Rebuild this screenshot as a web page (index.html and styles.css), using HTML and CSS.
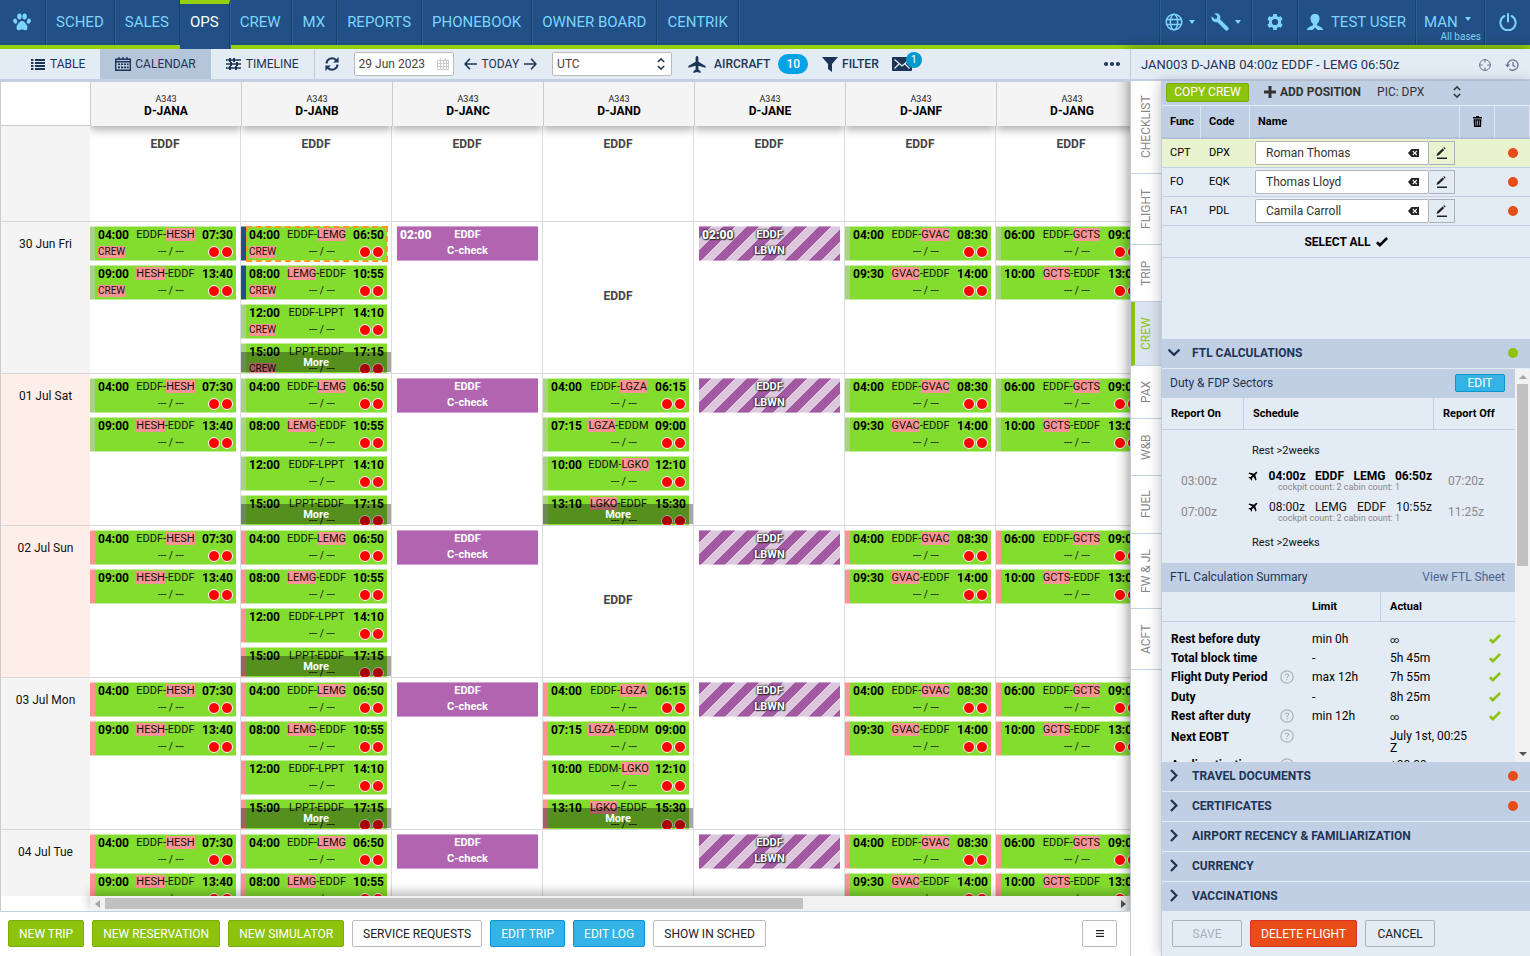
FILE: index.html
```html
<!DOCTYPE html>
<html lang="en">
<head>
<meta charset="utf-8">
<title>OPS Calendar</title>
<link rel="stylesheet" href="styles.css">
</head>
<body>
<svg class="sprite" aria-hidden="true">
  <symbol id="i-paw" viewBox="0 0 18 18"><ellipse cx="6.4" cy="3.6" rx="2.2" ry="3"/><ellipse cx="11.6" cy="3.6" rx="2.2" ry="3"/><ellipse cx="2.2" cy="8.2" rx="1.9" ry="2.6" transform="rotate(-20 2.2 8.2)"/><ellipse cx="15.8" cy="8.2" rx="1.9" ry="2.6" transform="rotate(20 15.8 8.2)"/><path d="M9 8c2.6 0 3 2 4.300 3.400C15 13 15 17 12.500 17.300 11 17.500 10.500 16.600 9 16.600S7 17.500 5.500 17.300C3 17 3 13 4.700 11.400 6 10 6.400 8 9 8z"/></symbol>
  <symbol id="i-globe" viewBox="0 0 18 18"><g fill="none" stroke="currentColor" stroke-width="1.500"><circle cx="9" cy="9" r="7.800"/><ellipse cx="9" cy="9" rx="3.600" ry="7.800"/><path d="M1.500 6.400h15M1.500 11.600h15"/></g></symbol>
  <symbol id="i-wrench" viewBox="0 0 18 18"><path d="M.6 3.200 3.800 6.100 6 5.600 6.300 3.300 3.400.5C6 -.3 8.700.8 9.300 3.600c.2 1 .1 1.900-.3 2.600l8.300 8.200c1.500 1.700-1.100 4.400-2.900 2.900L6.200 9C3.300 9.900-.3 7.600.6 3.200z"/></symbol>
  <symbol id="i-gear" viewBox="0 0 16 16"><path fill-rule="evenodd" d="M6.300 0h3.400l.5 2.200 1.500.9 2.200-.8 1.700 2.900-1.600 1.600v2.400l1.600 1.600-1.700 2.900-2.200-.8-1.500.9L9.700 16H6.300l-.5-2.200-1.500-.9-2.200.8L.4 10.800 2 9.200V6.800L.4 5.200l1.700-2.900 2.200.8 1.500-.9zM8 4.900a3.100 3.100 0 100 6.200 3.100 3.100 0 000-6.200z"/></symbol>
  <symbol id="i-user" viewBox="0 0 16 16"><path d="M8 0c3 0 4.800 2 4.500 5-.2 2.300-1.200 4-2.400 4.800v1.700c2 .8 5.400 1.400 5.900 4.500h-5.500L8 13.600 5.500 16H0c.5-3.100 3.900-3.700 5.900-4.500V9.800C4.700 9 3.700 7.300 3.500 5 3.200 2 5 0 8 0z"/></symbol>
  <symbol id="i-power" viewBox="0 0 18 18"><path fill="none" stroke="currentColor" stroke-width="2" stroke-linecap="round" d="M5.400 3A7.600 7.600 0 1012.600 3M9 .9v7.600"/></symbol>
  <symbol id="i-caret" viewBox="0 0 6 4"><path d="M0 0h6L3 4z"/></symbol>
  <symbol id="i-list" viewBox="0 0 14 11"><path d="M0 0h2.400v2H0zM4 0h10v2H4zM0 3h2.400v2H0zM4 3h10v2H4zM0 6h2.400v2H0zM4 6h10v2H4zM0 9h2.400v2H0zM4 9h10v2H4z"/></symbol>
  <symbol id="i-cal" viewBox="0 0 16 14"><path fill="none" stroke="currentColor" stroke-width="1.400" d="M.7 2.200h14.600v11H.7zM1 4.800h14M4 0v3M8 0v3M12 0v3"/><path d="M3 6.400h2v1.600H3zM6 6.400h2v1.600H6zM9 6.400h2v1.600H9zM12 6.400h1.600v1.600H12zM3 9.600h2v1.600H3zM6 9.600h2v1.600H6zM9 9.600h2v1.600H9zM12 9.600h1.600v1.600H12z"/></symbol>
  <symbol id="i-sliders" viewBox="0 0 15 12"><path d="M0 1.200h15v1.600H0zM0 5.200h15v1.600H0zM0 9.200h15v1.600H0zM3 0h2v4H3zM7 0h2v4H7zM10 4h2v4h-2zM4 4h2v4H4zM3 8h2v4H3zM9 8h2v4H9z"/></symbol>
  <symbol id="i-refresh" viewBox="0 0 14 14"><path fill="none" stroke="currentColor" stroke-width="2" d="M1.500 6.500A5.500 5.500 0 0111 3M12.500 7.500A5.500 5.500 0 013 11"/><path d="M13.600 0v5.400H8.200zM.4 14V8.600h5.400z"/></symbol>
  <symbol id="i-grid" viewBox="0 0 12 12"><path fill="none" stroke="currentColor" d="M.5 2.500h11v9H.5zM0 5.500h12M0 8.500h12M3.500 2v10M6.500 2v10M9.500 2v10M3.500 0v3M8.500 0v3"/></symbol>
  <symbol id="i-arrow" viewBox="0 0 13 12"><path fill="none" stroke="currentColor" stroke-width="1.600" d="M0 6h12M7 .8 12 6l-5 5.200"/></symbol>
  <symbol id="i-updown" viewBox="0 0 8 12"><path fill="none" stroke="currentColor" stroke-width="1.600" d="M.8 4 4 1l3.200 3M.8 8 4 11l3.200-3"/></symbol>
  <symbol id="i-plane" viewBox="0 0 18 17"><path d="M9 0c1 0 1.400 1.200 1.400 2.400v3.400L17.600 10v1.800l-7.200-2v3.800l2.200 1.700V17L9 16l-3.600 1v-1.700l2.200-1.700V9.800l-7.200 2V10l7.200-4.200V2.400C7.600 1.200 8 0 9 0z"/></symbol>
  <symbol id="i-funnel" viewBox="0 0 16 15"><path d="M0 0h16L10 7v8l-4-3V7z"/></symbol>
  <symbol id="i-mail" viewBox="0 0 20 14"><rect width="20" height="14" rx="1"/><path fill="none" stroke="#e3ebf5" stroke-width="1.200" d="M2.500 2.500 10 9l7.500-6.500M2.500 11.500 7 7M17.500 11.500 13 7"/></symbol>
  <symbol id="i-dots" viewBox="0 0 16 4"><circle cx="2" cy="2" r="2"/><circle cx="8" cy="2" r="2"/><circle cx="14" cy="2" r="2"/></symbol>
  <symbol id="i-target" viewBox="0 0 12 12"><g fill="none" stroke="currentColor"><circle cx="6" cy="6" r="5.400"/><path d="M6 0v3.500M6 8.500V12M0 6h3.500M8.500 6H12"/></g></symbol>
  <symbol id="i-history" viewBox="0 0 14 12"><path fill="none" stroke="currentColor" stroke-width="1.300" d="M2.600 6A5.200 5.200 0 114.300 9.900M8 3v3.400l2.300 1.400"/><path d="M0 5.600h5.200L2.600 8.600z"/></symbol>
  <symbol id="i-plus" viewBox="0 0 12 12"><path d="M4.500 0h3v4.500H12v3H7.500V12h-3V7.500H0v-3h4.500z"/></symbol>
  <symbol id="i-trash" viewBox="0 0 9 11"><path fill-rule="evenodd" d="M3 0h3v1h3v1.500H0V1h3zM.6 3.200h7.800L8 11H1zM2.500 4.500v5h.7v-5zM4.200 4.500v5h.7v-5zM5.900 4.500v5h.7v-5z"/></symbol>
  <symbol id="i-clear" viewBox="0 0 11 8"><path fill-rule="evenodd" d="M3.500 0H11v8H3.500L0 4zM5.200 1.600 4.400 2.400 6 4 4.400 5.600l.8.800L6.800 4.800l1.600 1.600.8-.8L7.600 4l1.600-1.600-.8-.8-1.600 1.600z"/></symbol>
  <symbol id="i-edit" viewBox="0 0 11 12"><path d="M1 10.500h10V12H1zM.5 9l.7-2.600 5.400-5 1.600 1.600-5.200 5zM7.200.8 8 0l1.700 1.600-.8.8z"/></symbol>
  <symbol id="i-check" viewBox="0 0 12 10"><path d="M1.800 4.200 0 6.200 3.900 10 12 2 10.200 0 3.900 6.300z"/></symbol>
  <symbol id="i-chev" viewBox="0 0 8 13"><path fill="none" stroke="currentColor" stroke-width="2.200" d="M1 1l5.400 5.500L1 12"/></symbol>
  <symbol id="i-menu" viewBox="0 0 8 7"><path d="M0 0h8v1.200H0zM0 2.900h8v1.200H0zM0 5.800h8V7H0z"/></symbol>
  <symbol id="i-help" viewBox="0 0 14 14"><circle cx="7" cy="7" r="6.200" fill="none" stroke="currentColor" stroke-width="1.200"/><path fill="none" stroke="currentColor" stroke-width="1.200" d="M5.300 5.600c0-2.200 3.400-2 3.300-.1C8.500 6.700 7 6.600 7 8.100M7 9v1.300"/></symbol>
</svg>

<header class="nav">
  <nav class="nav-main">
    <a class="nav-item nav-logo" href="#" aria-label="Home"><svg class="ic18"><use href="#i-paw"/></svg></a>
    <a class="nav-item" href="#">SCHED</a>
    <a class="nav-item" href="#">SALES</a>
    <a class="nav-item is-active" href="#">OPS</a>
    <a class="nav-item" href="#">CREW</a>
    <a class="nav-item nav-mx" href="#">MX</a>
    <a class="nav-item" href="#">REPORTS</a>
    <a class="nav-item" href="#">PHONEBOOK</a>
    <a class="nav-item" href="#">OWNER BOARD</a>
    <a class="nav-item" href="#">CENTRIK</a>
  </nav>
  <div class="nav-tools">
    <button class="tool tool-drop" aria-label="Language"><svg class="ic18"><use href="#i-globe"/></svg><svg class="caret"><use href="#i-caret"/></svg></button>
    <button class="tool tool-drop" aria-label="Tools"><svg class="ic18"><use href="#i-wrench"/></svg><svg class="caret"><use href="#i-caret"/></svg></button>
    <button class="tool" aria-label="Settings"><svg class="ic16"><use href="#i-gear"/></svg></button>
    <button class="tool tool-user"><svg class="ic16"><use href="#i-user"/></svg>TEST USER</button>
    <button class="tool tool-base"><span class="base-code">MAN <svg class="caret"><use href="#i-caret"/></svg></span><span class="base-note">All bases</span></button>
    <button class="tool" aria-label="Log out"><svg class="ic18"><use href="#i-power"/></svg></button>
  </div>
</header>

<div class="app">
  <main class="work">
    <div class="toolbar">
      <a class="view view-table" href="#"><svg class="ic-list"><use href="#i-list"/></svg>TABLE</a>
      <a class="view is-current" href="#"><svg class="ic-cal"><use href="#i-cal"/></svg>CALENDAR</a>
      <a class="view" href="#"><svg class="ic-sliders"><use href="#i-sliders"/></svg>TIMELINE</a>
      <button class="plain refresh" aria-label="Refresh"><svg class="ic14"><use href="#i-refresh"/></svg></button>
      <div class="field date-field"><input type="text" aria-label="Date" value="29 Jun 2023"><svg class="ic12"><use href="#i-grid"/></svg></div>
      <div class="today">
        <button class="plain" aria-label="Previous day"><svg class="ic-arrow is-back"><use href="#i-arrow"/></svg></button>
        <button class="plain">TODAY</button>
        <button class="plain" aria-label="Next day"><svg class="ic-arrow"><use href="#i-arrow"/></svg></button>
      </div>
      <div class="field zone-field"><select aria-label="Time zone"><option>UTC</option></select><svg class="ic-updown"><use href="#i-updown"/></svg></div>
      <button class="plain med aircraft"><svg class="ic-plane"><use href="#i-plane"/></svg>AIRCRAFT <span class="pill">10</span></button>
      <button class="plain med filter"><svg class="ic-funnel"><use href="#i-funnel"/></svg>FILTER</button>
      <button class="plain mail" aria-label="Messages"><svg class="ic-mail"><use href="#i-mail"/></svg><span class="badge">1</span></button>
      <button class="plain more-menu" aria-label="More"><svg class="ic-dots"><use href="#i-dots"/></svg></button>
    </div>
    <section class="calendar">
      <div class="cal-head" id="cal-head"></div>
      <div class="cal-body" id="cal-body"></div>
      <div class="hscroll"><span class="hs-left"></span><span class="hs-track"><span class="hs-thumb"></span></span><span class="hs-right"></span></div>
    </section>
    <footer class="actions">
      <button class="btn btn-green">NEW TRIP</button>
      <button class="btn btn-green">NEW RESERVATION</button>
      <button class="btn btn-green">NEW SIMULATOR</button>
      <button class="btn">SERVICE REQUESTS</button>
      <button class="btn btn-blue">EDIT TRIP</button>
      <button class="btn btn-blue">EDIT LOG</button>
      <button class="btn">SHOW IN SCHED</button>
      <button class="btn btn-menu" aria-label="Menu"><svg class="ic-menu"><use href="#i-menu"/></svg></button>
    </footer>
  </main>

  <aside class="side">
    <div class="side-title"><h2>JAN003 D-JANB 04:00z EDDF - LEMG 06:50z</h2><svg class="ic-target"><use href="#i-target"/></svg><svg class="ic-history"><use href="#i-history"/></svg></div>
    <div class="side-main">
      <nav class="tabs">
        <a class="tab tab-93" href="#">CHECKLIST</a>
        <a class="tab tab-71" href="#">FLIGHT</a>
        <a class="tab tab-57" href="#">TRIP</a>
        <a class="tab tab-64 is-on" href="#">CREW</a>
        <a class="tab tab-53" href="#">PAX</a>
        <a class="tab tab-57" href="#">W&amp;B</a>
        <a class="tab tab-58" href="#">FUEL</a>
        <a class="tab tab-75" href="#">FW &amp; JL</a>
        <a class="tab tab-61" href="#">ACFT</a>
      </nav>
      <div class="panel">
        <section class="crew">
          <div class="crew-bar">
            <button class="btn btn-green btn-small">COPY CREW</button>
            <button class="plain add-pos"><svg class="ic12"><use href="#i-plus"/></svg>ADD POSITION</button>
            <div class="pic"><select aria-label="PIC"><option>PIC: DPX</option></select><svg class="ic-updown"><use href="#i-updown"/></svg></div>
          </div>
          <table class="crew-table">
            <thead><tr><th class="c-func">Func</th><th class="c-code">Code</th><th>Name</th><th class="c-del"><svg class="ic-trash"><use href="#i-trash"/></svg></th><th class="c-dot"></th></tr></thead>
            <tbody>
              <tr class="is-sel"><td>CPT</td><td>DPX</td><td colspan="2" class="c-name"><div class="name"><div class="name-box"><input type="text" aria-label="CPT name" value="Roman Thomas"><svg class="ic-clear"><use href="#i-clear"/></svg></div><button class="edit" aria-label="Edit CPT"><svg class="ic-edit"><use href="#i-edit"/></svg></button></div></td><td><span class="dot"></span></td></tr>
              <tr><td>FO</td><td>EQK</td><td colspan="2" class="c-name"><div class="name"><div class="name-box"><input type="text" aria-label="FO name" value="Thomas Lloyd"><svg class="ic-clear"><use href="#i-clear"/></svg></div><button class="edit" aria-label="Edit FO"><svg class="ic-edit"><use href="#i-edit"/></svg></button></div></td><td><span class="dot"></span></td></tr>
              <tr><td>FA1</td><td>PDL</td><td colspan="2" class="c-name"><div class="name"><div class="name-box"><input type="text" aria-label="FA1 name" value="Camila Carroll"><svg class="ic-clear"><use href="#i-clear"/></svg></div><button class="edit" aria-label="Edit FA1"><svg class="ic-edit"><use href="#i-edit"/></svg></button></div></td><td><span class="dot"></span></td></tr>
            </tbody>
          </table>
          <button class="select-all">SELECT ALL <svg class="ic-check"><use href="#i-check"/></svg></button>
        </section>

        <button class="acc is-open"><svg class="ic-chev"><use href="#i-chev"/></svg><span>FTL CALCULATIONS</span><span class="dot dot-ok"></span></button>
        <section class="ftl">
          <div class="ftl-view">
            <div class="sub"><span>Duty &amp; FDP Sectors</span><button class="btn btn-blue btn-edit">EDIT</button></div>
            <table class="duty">
              <thead><tr><th class="d-on">Report On</th><th>Schedule</th><th class="d-off">Report Off</th></tr></thead>
              <tbody>
                <tr class="rest"><td></td><td>Rest &gt;2weeks</td><td></td></tr>
                <tr class="leg is-now"><td>03:00z</td><td><div class="leg-line"><svg class="ic-fly"><use href="#i-plane"/></svg><span>04:00z</span><span>EDDF</span><span>LEMG</span><span>06:50z</span></div><div class="leg-note">cockpit count: 2 cabin count: 1</div></td><td>07:20z</td></tr>
                <tr class="leg"><td>07:00z</td><td><div class="leg-line"><svg class="ic-fly"><use href="#i-plane"/></svg><span>08:00z</span><span>LEMG</span><span>EDDF</span><span>10:55z</span></div><div class="leg-note">cockpit count: 2 cabin count: 1</div></td><td>11:25z</td></tr>
                <tr class="rest"><td></td><td>Rest &gt;2weeks</td><td></td></tr>
              </tbody>
            </table>
            <div class="sub"><span>FTL Calculation Summary</span><a href="#">View FTL Sheet</a></div>
            <table class="sum">
              <thead><tr><th class="s-name"></th><th class="s-help"></th><th class="s-limit">Limit</th><th class="s-act">Actual</th><th></th></tr></thead>
              <tbody>
                <tr><th>Rest before duty</th><td></td><td>min 0h</td><td><span class="inf">∞</span></td><td><svg class="ic-check"><use href="#i-check"/></svg></td></tr>
                <tr><th>Total block time</th><td></td><td>-</td><td>5h 45m</td><td><svg class="ic-check"><use href="#i-check"/></svg></td></tr>
                <tr><th>Flight Duty Period</th><td><svg class="ic-help"><use href="#i-help"/></svg></td><td>max 12h</td><td>7h 55m</td><td><svg class="ic-check"><use href="#i-check"/></svg></td></tr>
                <tr><th>Duty</th><td></td><td>-</td><td>8h 25m</td><td><svg class="ic-check"><use href="#i-check"/></svg></td></tr>
                <tr><th>Rest after duty</th><td><svg class="ic-help"><use href="#i-help"/></svg></td><td>min 12h</td><td><span class="inf">∞</span></td><td><svg class="ic-check"><use href="#i-check"/></svg></td></tr>
                <tr class="s-tall"><th>Next EOBT</th><td><svg class="ic-help"><use href="#i-help"/></svg></td><td></td><td>July 1st, 00:25 Z</td><td></td></tr>
                <tr><th>Acclimatisation</th><td><svg class="ic-help"><use href="#i-help"/></svg></td><td></td><td>+00:00</td><td></td></tr>
              </tbody>
            </table>
          </div>
          <div class="vscroll"><span class="vs-up"></span><span class="vs-track"><span class="vs-thumb"></span></span><span class="vs-down"></span></div>
        </section>
        <button class="acc"><svg class="ic-chev"><use href="#i-chev"/></svg><span>TRAVEL DOCUMENTS</span><span class="dot"></span></button>
        <button class="acc"><svg class="ic-chev"><use href="#i-chev"/></svg><span>CERTIFICATES</span><span class="dot"></span></button>
        <button class="acc"><svg class="ic-chev"><use href="#i-chev"/></svg><span>AIRPORT RECENCY &amp; FAMILIARIZATION</span></button>
        <button class="acc"><svg class="ic-chev"><use href="#i-chev"/></svg><span>CURRENCY</span></button>
        <button class="acc"><svg class="ic-chev"><use href="#i-chev"/></svg><span>VACCINATIONS</span></button>
        <footer class="side-actions">
          <button class="btn btn-clear btn-wide" disabled>SAVE</button>
          <button class="btn btn-red">DELETE FLIGHT</button>
          <button class="btn btn-clear btn-wide">CANCEL</button>
        </footer>
      </div>
    </div>
  </aside>
</div>
<script src="calendar.js"></script>
</body>
</html>
```
FILE: styles.css
```css
* { box-sizing: border-box; }
body { margin: 0; height: 100vh; display: flex; flex-direction: column; overflow: hidden; font: 12px/16px Roboto, "Liberation Sans", sans-serif; color: #000; background: #fff; }
a { color: inherit; text-decoration: none; }
button, input, select { font: inherit; color: inherit; }
button { background: none; border: 0; padding: 0; cursor: pointer; }
svg { display: block; flex: none; fill: currentColor; }
table { border-collapse: separate; border-spacing: 0; width: 100%; table-layout: fixed; }
th { text-align: left; font-weight: 700; }
td, th { padding: 0; }
h2 { margin: 0; font-weight: 400; }
.sprite { position: absolute; width: 0; height: 0; }
.ic12 { width: 12px; height: 12px; }
.ic14 { width: 14px; height: 14px; }
.ic16 { width: 16px; height: 16px; }
.ic18 { width: 18px; height: 18px; }
.caret { width: 6px; height: 4px; }
.ic-list { width: 14px; height: 11px; }
.ic-cal { width: 16px; height: 14px; }
.ic-sliders { width: 15px; height: 12px; }
.ic-arrow { width: 13px; height: 12px; }
.is-back { transform: scaleX(-1); }
.ic-updown { width: 8px; height: 12px; }
.ic-plane { width: 18px; height: 17px; }
.ic-funnel { width: 16px; height: 15px; }
.ic-mail { width: 20px; height: 14px; }
.ic-dots { width: 16px; height: 4px; }
.ic-target { width: 12px; height: 12px; }
.ic-history { width: 14px; height: 12px; }
.ic-trash { width: 9px; height: 11px; }
.ic-clear { width: 11px; height: 8px; }
.ic-edit { width: 11px; height: 12px; }
.ic-check { width: 12px; height: 10px; }
.ic-chev { width: 8px; height: 13px; }
.ic-menu { width: 8px; height: 7px; }
.ic-help { width: 14px; height: 14px; }
.ic-fly { width: 11px; height: 11px; transform: rotate(45deg); }

/* top navigation */
.nav { flex: none; display: flex; justify-content: space-between; height: 49px; background: #205085; box-shadow: inset 0 -4px #97d00f; color: #7fd3ff; font-size: 15px; }
.nav-main, .nav-tools { display: flex; }
.nav-main { flex: 1; }
.nav-item { display: flex; align-items: center; height: 45px; padding: 0 10px 2px; border-right: 1px solid #17406e; box-shadow: 1px 0 #2c6090; }
.nav-logo { padding: 0 14px 2px 13px; }
.nav-mx { padding: 0 11px 2px; }
.nav-item.is-active { height: 49px; border-top: 4px solid #97d00f; padding-bottom: 10px; background: #205085; color: #fff; }
.tool { display: flex; align-items: center; justify-content: center; gap: 6px; width: 46px; height: 45px; padding-bottom: 2px; border-left: 1px solid #17406e; box-shadow: inset 1px 0 #2c6090; }
.tool-drop { padding-right: 6px; }
.tool-user { width: 118px; gap: 8px; }
.tool-base { width: 69px; flex-direction: column; align-items: stretch; gap: 0; padding: 7px 3px 0 8px; line-height: 14px; }
.base-code { display: flex; align-items: center; gap: 7px; height: 22px; padding-top: 6px; }
.base-code .caret { align-self: flex-start; margin-top: 3px; }
.base-note { font-size: 10px; text-align: right; }

.app { flex: 1; min-height: 0; display: flex; }
.work { flex: 1; min-width: 0; display: flex; flex-direction: column; }

/* toolbar */
.toolbar { position: relative; z-index: 4; flex: none; display: flex; align-items: center; height: 33px; background: #e3ebf5; border-bottom: 3px solid #c4d0e2; color: #1c3557; }
.view { display: flex; align-items: center; gap: 5px; height: 30px; padding: 0 15px; }
.view-table { padding-left: 31px; }
.view.is-current { gap: 4px; background: #b5c5da; }
.view:nth-child(3) { border-right: 1px solid #c0cde0; }
.refresh { margin: 0 15px 0 10px; }
.field { display: flex; align-items: center; height: 24px; padding: 0 4px; border: 1px solid #bbb; border-radius: 2px; background: #fff; color: #444; }
.field input, .field select { flex: 1; min-width: 0; border: 0; padding: 0; background: none; appearance: none; outline: 0; }
.date-field { width: 100px; }
.date-field svg { color: #ccc; }
.today { display: flex; align-items: center; gap: 5px; margin: 0 15px 0 10px; }
.zone-field { width: 120px; padding-right: 6px; }
.zone-field svg { color: #1c3557; }
.plain { display: flex; align-items: center; }
.med { font-weight: 500; }
.aircraft { margin-left: 16px; gap: 8px; }
.pill { height: 20px; padding: 0 8px; border-radius: 10px; background: #00a2e8; color: #fff; line-height: 20px; }
.filter { margin-left: 14px; gap: 4px; }
.mail { position: relative; margin-left: 13px; }
.badge { position: absolute; left: 14px; top: -5px; width: 16px; height: 16px; border-radius: 8px; background: #0098d0; color: #fff; font-size: 11px; }
.more-menu { margin: 0 10px 0 auto; }

/* calendar */
.calendar { flex: 1; min-height: 0; display: flex; flex-direction: column; overflow: hidden; border-left: 1px solid #ccc; }
.cal-head { position: relative; z-index: 3; flex: none; display: flex; height: 44px; }
.corner { flex: none; width: 89px; background: #fff; border-bottom: 1px solid #ccc; }
.tail { flex: none; width: 151px; padding-top: 11px; border-left: 1px solid #ccc; background: #f4f4f4; box-shadow: 0 4px 8px rgba(0,0,0,.3); text-align: center; line-height: 12px; font-size: 9px; color: #222; clip-path: inset(0 0 -16px 0); }
.tail b { display: block; font-size: 12px; color: #000; }
.cal-body { flex: 1; min-height: 0; overflow: hidden; }
.day { display: flex; height: 152px; }
.day-first { height: 96px; }
.day-name { flex: none; width: 89px; padding-top: 14px; border-bottom: 1px solid #d8d8d8; background: #f4f4f4; text-align: center; color: #111; }
.is-weekend .day-name { background: #fdeee9; }
.cell { position: relative; flex: none; width: 151px; padding-top: 4px; border-right: 1px solid #ddd; border-bottom: 1px solid #d8d8d8; overflow: hidden; }
.cell.is-idle { display: flex; align-items: center; justify-content: center; padding: 0 0 4px; font-weight: 700; color: #444; }
.day-first .cell.is-idle { align-items: flex-start; padding-top: 10px; }
.ev { --stripe: #a8d284; width: 146px; height: 35px; margin-bottom: 4px; padding: 1px 3px 0 8px; border: solid rgba(255,255,255,.5); border-width: 1px 0; background: linear-gradient(to right, var(--stripe) 5px, #83dd2f 5px); }
.ev-pink { --stripe: #ff9292; }
.ev-blue { --stripe: #205085; }
.ev-picked { position: relative; }
.ev-picked::after { content: ""; position: absolute; inset: -1px -1px -2px 5px; border: 2px dashed #ff9a1a; }
.ev-top { display: grid; grid-template-columns: 1fr auto 1fr; align-items: center; height: 14px; line-height: 14px; }
.ev-top b:last-child { text-align: right; }
.ev-route { font-size: 11px; color: #111; }
.alert { background: #ff9494; }
.ev-sub { display: grid; grid-template-columns: 60px 24px 1fr; align-items: center; height: 19px; font-size: 10px; line-height: 12px; color: #111; }
.ev-sub .alert { justify-self: start; }
.ev-dash { text-align: center; white-space: nowrap; }
.ev-dots { display: flex; justify-content: flex-end; gap: 1px; }
.ev-dots i { width: 12px; height: 12px; border: 1px solid #fff; border-radius: 50%; background: #f00; }
.maint { position: relative; width: 141px; height: 35px; margin-left: 5px; border: solid rgba(255,255,255,.4); border-width: 1px 0; background: #b165b1; color: #fff; font-size: 11px; font-weight: 700; line-height: 16px; text-align: center; }
.maint span { display: block; }
.maint b { position: absolute; left: 3px; top: 0; font-size: 12px; }
.maint-ferry { background: linear-gradient(135deg, #a259a2 25%, #dcc8dd 25% 50%, #a259a2 50% 75%, #dcc8dd 75%) 0 0 / 24px 24px; text-shadow: 0 0 2px #222, 0 0 2px #222, 1px 1px 1px #333; }
.more { position: absolute; left: 0; right: 0; bottom: 1px; height: 20px; padding: 2px 0 0; background: rgba(0,0,0,.35); color: #fff; font-size: 11px; font-weight: 700; text-align: center; }
.hscroll { position: relative; z-index: 2; flex: none; display: flex; align-items: center; gap: 5px; height: 15px; margin-left: 89px; padding: 0 4px 0 5px; background: #f1f1f1; box-shadow: 0 -3px 12px rgba(0,0,0,.3); }
.hs-left, .hs-right { border: solid transparent; border-width: 4px 0; }
.hs-left { border-right: 5px solid #a3a3a3; }
.hs-right { border-left: 5px solid #505050; }
.hs-track { flex: 1; height: 11px; }
.hs-thumb { display: block; width: 69%; height: 11px; background: #c1c1c1; }

.actions { position: relative; z-index: 4; flex: none; display: flex; gap: 8px; height: 45px; padding: 8px 13px 0 8px; border-top: 1px solid #c5cfdf; background: #fff; }
.btn { height: 27px; padding: 0 10px; border: 1px solid #bbb; border-radius: 2px; background: #fff; color: #222; white-space: nowrap; }
.btn-green { border-color: #7cab0c; background: #8dc20d; color: #fff; }
.btn-blue { border-color: #0f93cc; background: #33b3e6; color: #fff; }
.btn-red { border-color: #d23127; background: #e84c18; color: #fff; }
.btn-clear { border-color: #a9b1bd; background: none; }
.btn:disabled { color: #a9b1bd; }
.btn-wide { width: 70px; }
.btn-small { width: 83px; height: 19px; padding: 0; line-height: 17px; }
.btn-edit { width: 50px; height: 18px; padding: 0; line-height: 16px; }
.btn-menu { display: flex; align-items: center; justify-content: center; width: 35px; margin-left: auto; }

/* side panel */
.side { position: relative; z-index: 3; flex: none; width: 400px; display: flex; flex-direction: column; border-left: 1px solid #c0cde0; background: #fff; box-shadow: -2px 0 12px rgba(0,0,0,.4); }
.side-title { flex: none; display: flex; align-items: center; gap: 14px; height: 32px; padding: 2px 11px 0 10px; border-bottom: 2px solid #c4d0e2; background: #e3ebf5; color: #1c3557; }
.side-title h2 { flex: 1; font-size: 13px; }
.side-title svg { color: #66758c; }
.side-main { flex: 1; min-height: 0; display: flex; }
.tabs { flex: none; width: 30px; color: #888; }
.tab { display: flex; align-items: center; justify-content: center; width: 30px; border-top: 1px solid #c4d2e4; writing-mode: vertical-rl; transform: rotate(180deg); }
.tab.is-on { padding-left: 4px; border-right: 4px solid #8dc20d; background: #dbe5f1; color: #8dc20d; }
.tab-53 { height: 53px; }
.tab-57 { height: 57px; }
.tab-58 { height: 58px; }
.tab-61 { height: 61px; }
.tab-64 { height: 64px; }
.tab-71 { height: 71px; }
.tab-75 { height: 75px; }
.tab-93 { height: 93px; }
.panel { position: relative; flex: 1; min-width: 0; display: flex; flex-direction: column; border-left: 1px solid #c0cde0; background: #e3ebf5; box-shadow: -2px 0 12px rgba(0,0,0,.2); }
.crew { flex: 258 1 0; min-height: 0; overflow: hidden; }
.crew-bar { display: flex; align-items: center; height: 25px; padding: 0 4px 2px; border-bottom: 1px solid #e3ebf5; background: #c0cfe3; color: #333; }
.add-pos { margin-left: 15px; gap: 4px; font-weight: 700; }
.pic { display: flex; align-items: center; width: 84px; margin-left: 16px; }
.pic select { flex: 1; min-width: 0; border: 0; padding: 0; background: none; appearance: none; }
.crew-table { font-size: 11px; }
.crew-table th { height: 33px; padding-left: 8px; border-right: 1px solid #dbe5f1; border-bottom: 2px solid #b2c1d6; background: #c0cfe3; }
.crew-table td { height: 29px; padding-left: 8px; border-bottom: 1px solid #c4d0e2; }
.crew-table .is-sel td { background: #e9f3cf; }
.c-func { width: 39px; }
.c-code { width: 49px; }
.crew-table .c-del { width: 35px; padding-left: 13px; }
.c-dot { width: 35px; }
.crew-table td.c-name { padding-left: 5px; }
.crew-table td:last-child { padding-left: 13px; }
.name { display: flex; width: 200px; height: 24px; font-size: 12px; color: #333; }
.name-box { display: flex; align-items: center; flex: 1; min-width: 0; padding: 0 9px 0 10px; border: 1px solid #b5b5b5; border-radius: 2px; background: #fff; }
.name-box input { flex: 1; min-width: 0; border: 0; padding: 0; background: none; outline: 0; }
.name-box svg, .edit svg { color: #222; }
.edit { flex: none; display: flex; align-items: center; justify-content: center; width: 26px; border: 1px solid #a9b1bd; border-left: 0; }
.dot { display: block; width: 10px; height: 10px; border-radius: 50%; background: #e84c18; }
.dot-ok { background: #8dc20d; }
.select-all { display: flex; align-items: center; justify-content: center; gap: 5px; width: 100%; height: 32px; border-bottom: 1px solid #c4d0e2; font-weight: 700; }
.acc { flex: none; display: flex; align-items: center; gap: 14px; height: 30px; padding: 0 12px 2px 8px; border-bottom: 1px solid #e3ebf5; background: #c0cfe3; color: #1c3557; font-weight: 700; }
.acc .dot { margin-left: auto; }
.acc.is-open svg { transform: rotate(90deg); }
.ftl { flex: 393 1 0; min-height: 0; display: flex; overflow: hidden; }
.ftl-view { flex: 1; min-width: 0; overflow: hidden; }
.sub { display: flex; align-items: center; justify-content: space-between; height: 29px; padding: 0 10px 2px 8px; background: #c0cfe3; color: #1c3557; }
.sub a { color: #4b668c; }
.duty th { height: 32px; padding-left: 9px; border-right: 1px solid #c0cfe3; border-bottom: 1px solid #c0cfe3; font-size: 11px; }
.duty th:last-child { border-right: 0; }
.d-on { width: 82px; }
.d-off { width: 81px; }
.duty tbody { color: #888; }
.duty tbody td:first-child { padding-left: 19px; }
.duty tbody td:last-child { padding-left: 14px; }
.rest td { padding-left: 8px; font-size: 11px; color: #111; }
.rest:last-child td { height: 36px; padding-bottom: 5px; }
.rest:first-child td { height: 35px; padding-top: 6px; }
.leg td { height: 31px; }
.leg-line { display: flex; align-items: center; justify-content: space-between; height: 12px; padding: 0 2px 0 4px; color: #111; }
.is-now .leg-line { font-weight: 700; color: #000; }
.leg-line svg { color: #000; }
.leg-note { font-size: 9px; line-height: 10px; text-align: center; }
.sum thead th { height: 30px; border-bottom: 1px solid #c0cfe3; font-size: 11px; }
.s-name { width: 118px; }
.s-help { width: 32px; }
.s-limit { width: 69px; }
.sum thead .s-limit { border-right: 1px solid #c0cfe3; }
.s-act { width: 96px; }
.sum thead .s-act { padding-left: 9px; }
.sum tbody th { padding-left: 9px; }
.sum tbody td, .sum tbody th { height: 19px; }
.sum tbody tr:nth-child(odd) > * { height: 20px; }
.sum tbody td:nth-child(4) { padding-left: 9px; line-height: 12px; }
.sum tbody td:last-child { padding-left: 12px; color: #8dc20d; }
.sum tbody tr:first-child > * { height: 26px; padding-top: 8px; }
.sum tbody tr.s-tall > * { height: 29px; vertical-align: top; padding-top: 3px; }
.sum tbody tr.s-tall > td:nth-child(4) { padding-top: 4px; }
.inf { font-size: 9px; }
.ic-help { color: #aab2bd; }
.vscroll { flex: none; display: flex; flex-direction: column; align-items: center; gap: 5px; width: 15px; padding: 6px 0; background: #f1f1f1; }
.vs-up, .vs-down { border: solid transparent; border-width: 0 4px; }
.vs-up { border-bottom: 4px solid #a3a3a3; }
.vs-down { border-top: 4px solid #505050; }
.vs-track { flex: 1; width: 11px; }
.vs-thumb { display: block; width: 11px; height: 50%; background: #c1c1c1; }
.side-actions { flex: none; display: flex; gap: 8px; height: 44px; padding: 8px 10px; }
```
FILE: calendar.js
```javascript
const tails = ["D-JANA", "D-JANB", "D-JANC", "D-JAND", "D-JANE", "D-JANF", "D-JANG"];
// A "*" marks the airport that carries an alert.
const flights = {
  "D-JANA": [["04:00", "EDDF-*HESH", "07:30"], ["09:00", "*HESH-EDDF", "13:40"]],
  "D-JANB": [["04:00", "EDDF-*LEMG", "06:50"], ["08:00", "*LEMG-EDDF", "10:55"], ["12:00", "EDDF-LPPT", "14:10"], ["15:00", "LPPT-EDDF", "17:15"]],
  "D-JAND": [["04:00", "EDDF-*LGZA", "06:15"], ["07:15", "*LGZA-EDDM", "09:00"], ["10:00", "EDDM-*LGKO", "12:10"], ["13:10", "*LGKO-EDDF", "15:30"]],
  "D-JANF": [["04:00", "EDDF-*GVAC", "08:30"], ["09:30", "*GVAC-EDDF", "14:00"]],
  "D-JANG": [["06:00", "EDDF-*GCTS", "09:00"], ["10:00", "*GCTS-EDDF", "13:00"]]
};
const days = ["30 Jun Fri", "01 Jul Sat", "02 Jul Sun", "03 Jul Mon", "04 Jul Tue"];

const route = text => text.split("-").map(a => a[0] === "*" ? `<span class="alert">${a.slice(1)}</span>` : a).join("-");

function flight(f, tail, day, n) {
  let kind = day > 1 ? "ev-pink" : "";
  if (day === 0 && tail === "D-JANB" && n < 2) kind = n ? "ev-blue" : "ev-blue ev-picked";
  const crew = day === 0 && (tail === "D-JANA" || tail === "D-JANB") ? '<span class="alert">CREW</span>' : "<span></span>";
  return `<div class="ev ${kind}"><div class="ev-top"><b>${f[0]}</b><span class="ev-route">${route(f[1])}</span><b>${f[2]}</b></div>` +
    `<div class="ev-sub">${crew}<span class="ev-dash">--- / ---</span><span class="ev-dots"><i></i><i></i></span></div></div>`;
}

function cell(tail, day) {
  const start = day === 0 ? "<b>02:00</b>" : "";
  if (tail === "D-JANC") return `<div class="cell"><div class="maint">${start}<span>EDDF</span><span>C-check</span></div></div>`;
  if (tail === "D-JANE") return `<div class="cell"><div class="maint maint-ferry">${start}<span>EDDF</span><span>LBWN</span></div></div>`;
  if (tail === "D-JAND" && day % 2 === 0) return '<div class="cell is-idle">EDDF</div>';
  const list = flights[tail];
  const more = list.length > 3 ? '<button class="more">More</button>' : "";
  return `<div class="cell">${list.map((f, n) => flight(f, tail, day, n)).join("")}${more}</div>`;
}

document.getElementById("cal-head").innerHTML = '<div class="corner"></div>' + tails.map(t => `<div class="tail">A343<b>${t}</b></div>`).join("");
document.getElementById("cal-body").innerHTML =
  `<div class="day day-first"><div class="day-name"></div>${tails.map(() => '<div class="cell is-idle">EDDF</div>').join("")}</div>` +
  days.map((d, i) => `<div class="day ${i === 1 || i === 2 ? "is-weekend" : ""}"><div class="day-name">${d}</div>${tails.map(t => cell(t, i)).join("")}</div>`).join("");
```
